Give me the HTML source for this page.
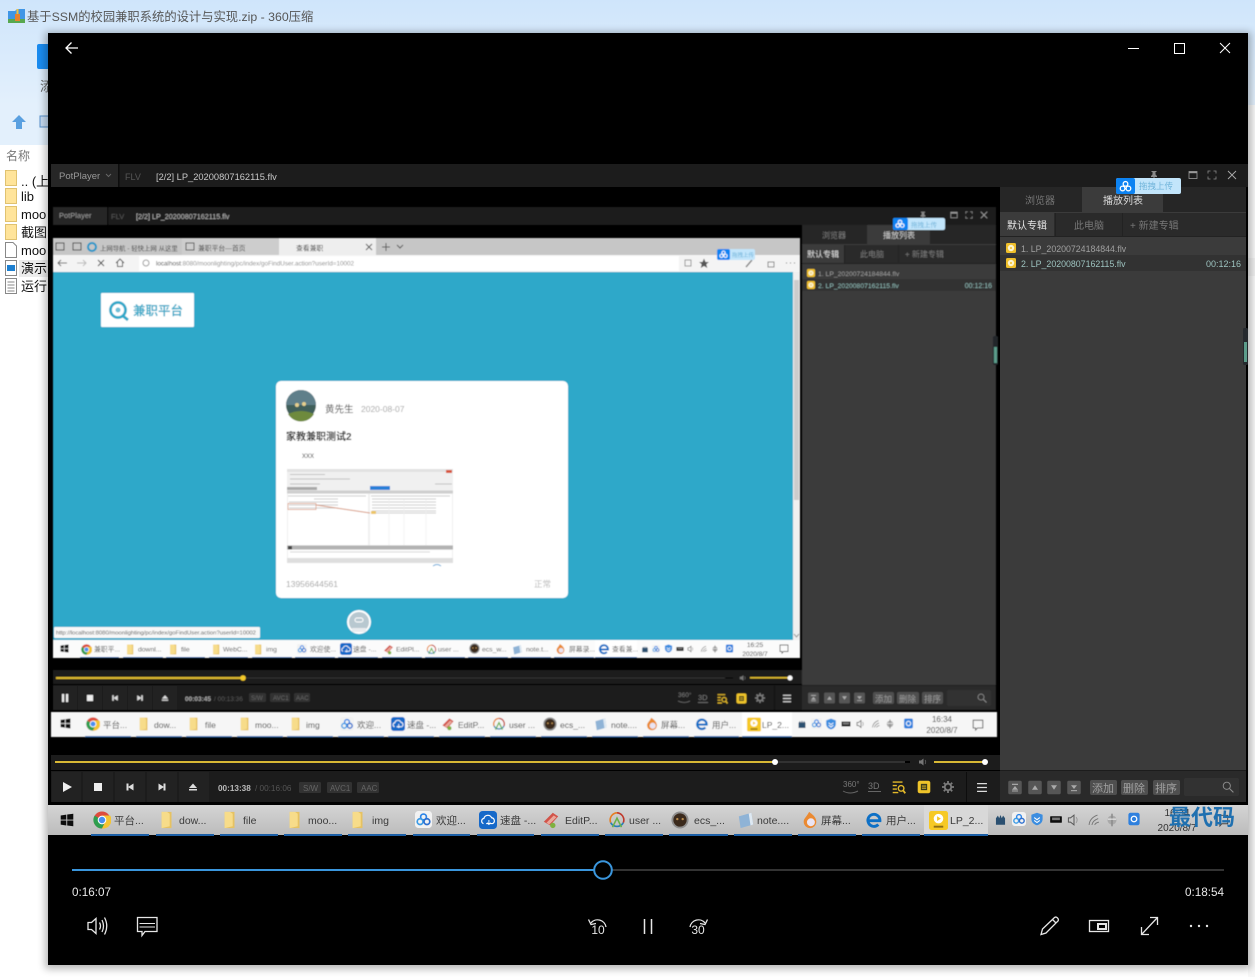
<!DOCTYPE html>
<html lang="zh"><head><meta charset="utf-8"><title>基于SSM的校园兼职系统的设计与实现</title>
<style>
html,body{margin:0;padding:0;background:#fff;width:1255px;height:977px;overflow:hidden}
svg{display:block;position:absolute;left:0;top:0}
text{font-family:"Liberation Sans","Noto Sans CJK SC",sans-serif}
</style></head><body>
<svg width="1255" height="977" viewBox="0 0 1255 977" xmlns="http://www.w3.org/2000/svg">
<defs>
<linearGradient id="top" x1="0" y1="0" x2="0" y2="1"><stop offset="0" stop-color="#cfe5fb"/><stop offset="1" stop-color="#e3f0fc"/></linearGradient>
<linearGradient id="tb3" x1="0" y1="0" x2="0" y2="1"><stop offset="0" stop-color="#d4d4d4"/><stop offset="1" stop-color="#bcbcbc"/></linearGradient>
<filter id="b1" x="-2%" y="-2%" width="104%" height="104%"><feGaussianBlur stdDeviation="0.45"/></filter>
<filter id="b2" x="-2%" y="-2%" width="104%" height="104%"><feGaussianBlur stdDeviation="0.35"/></filter>
<filter id="sh" x="-5%" y="-5%" width="110%" height="110%"><feGaussianBlur stdDeviation="4"/></filter>
<symbol id="win" viewBox="0 0 20 20"><path d="M1 3.5 9 2.3V9.4H1zM10.3 2.1 19 1V9.4H10.3zM1 10.7H9V17.8L1 16.6zM10.3 10.7H19V19L10.3 17.9z" fill="#111"/></symbol>
<symbol id="chrome" viewBox="0 0 20 20"><circle cx="10" cy="10" r="9.5" fill="#dd4b3c"/><path d="M10 10 1.8 5.2A9.5 9.5 0 0 0 10 19.5L14 11z" fill="#2f9e4f"/><path d="M10 5H19A9.5 9.5 0 0 1 10 19.5L14 11z" fill="#f4c430"/><circle cx="10" cy="10" r="4.8" fill="#fff"/><circle cx="10" cy="10" r="3.6" fill="#4a8ff0"/></symbol>
<symbol id="fold" viewBox="0 0 20 20"><path d="M4 1H15V19H4z" fill="#e6c262"/><path d="M4 1H10L13 3V17L4 19z" fill="#f7dc8a"/></symbol>
<symbol id="baidu" viewBox="0 0 20 20"><rect x="0" y="0" width="20" height="20" rx="4" fill="#f2f2f2"/><g fill="none" stroke-width="2"><circle cx="10" cy="7" r="3.4" stroke="#2d85e8"/><circle cx="6" cy="12.5" r="3.4" stroke="#3b9be6"/><circle cx="14" cy="12.5" r="3.4" stroke="#2d6fd0"/></g></symbol>
<symbol id="speed" viewBox="0 0 20 20"><rect width="20" height="20" rx="4" fill="#1769c9"/><path d="M5 14A3 3 0 0 1 5.5 8.2 4.5 4.5 0 0 1 14 7.5 3.4 3.4 0 0 1 15 14H8" fill="none" stroke="#fff" stroke-width="1.3"/><path d="M11 10v5m-2-2 2 2 2-2" fill="none" stroke="#fff"/></symbol>
<symbol id="edit" viewBox="0 0 20 20"><path d="M2 12 12 2l6 4-9 10z" fill="#d2534a"/><path d="M5 13 13 5l3 2-8 8z" fill="#e9a79a"/><circle cx="12" cy="16" r="3" fill="#7fb13f"/></symbol>
<symbol id="user" viewBox="0 0 20 20"><g fill="none" stroke-width="1.8"><path d="M3 13A8 8 0 0 1 10 2" stroke="#e67e22"/><path d="M10 2A8 8 0 0 1 17 13" stroke="#c0392b"/><path d="M17 13A8 8 0 0 1 3 13" stroke="#2980b9"/><path d="M5 18 10 8l5 10" stroke="#6ab04c"/></g></symbol>
<symbol id="ecs" viewBox="0 0 20 20"><circle cx="10" cy="10" r="9.5" fill="#8f8f8f"/><circle cx="10" cy="10" r="7.4" fill="#3a2a1e"/><circle cx="7" cy="9" r="1.3" fill="#b68a4e"/><circle cx="13" cy="9" r="1.3" fill="#b68a4e"/></symbol>
<symbol id="note" viewBox="0 0 20 20"><path d="M2 6 16 2 18 15 4 19z" fill="#8fb3d6"/><path d="M13 2.8 16 2 18 15 15 16z" fill="#dfe9f2"/></symbol>
<symbol id="fire" viewBox="0 0 20 20"><path d="M9 1C13 4 17 7 17 12A7 7 0 0 1 3 12C3 8 6 7 9 1z" fill="#ea8a32"/><circle cx="11" cy="12.5" r="4.4" fill="#e9e4f3"/></symbol>
<symbol id="ie" viewBox="0 0 20 20"><path d="M4 10.8H16.6A6.7 6.7 0 1 0 14.8 15" fill="none" stroke="#0f6fc6" stroke-width="3.2"/></symbol>
<symbol id="pl" viewBox="0 0 20 20"><rect width="20" height="20" rx="2.5" fill="#f6c927"/><circle cx="10" cy="8" r="5" fill="#fff"/><path d="M8.5 5.5 12.5 8 8.5 10.5z" fill="#f6c927"/><rect x="5" y="15.5" width="10" height="2" fill="#8d6d12"/></symbol>
<symbol id="t1" viewBox="0 0 20 20"><path d="M3 18V8l3-4 2 4 2-5 2 5 2-4 3 4v10z" fill="#29506f"/></symbol>
<symbol id="t3" viewBox="0 0 20 20"><path d="M10 1 18 4V10C18 15 14 18 10 19 6 18 2 15 2 10V4z" fill="#3a8de0"/><path d="M6 8l4 3 4-3M6 12l4 3 4-3" fill="none" stroke="#fff" stroke-width="1.5"/></symbol>
<symbol id="t4" viewBox="0 0 20 20"><rect x="1" y="5" width="18" height="10" rx="1" fill="#111"/><rect x="4" y="7" width="12" height="4" fill="#777"/></symbol>
<symbol id="t5" viewBox="0 0 20 20"><path d="M2 7H5L10 3V17L5 13H2z" fill="none" stroke="#555" stroke-width="1.4"/><path d="M13 6Q16 10 13 14" fill="none" stroke="#999" stroke-width="1.4"/></symbol>
<symbol id="t6" viewBox="0 0 20 20"><g fill="none" stroke="#777" stroke-width="1.4"><path d="M3 17Q4 7 15 3"/><path d="M7 17Q8 11 16 8"/><path d="M11 17Q12 14 17 13"/></g></symbol>
<symbol id="t7" viewBox="0 0 20 20"><circle cx="10" cy="10" r="6.5" fill="#a9a9a9"/><rect x="9" y="1" width="2" height="18" fill="#888"/><rect x="4" y="8" width="12" height="1.5" fill="#eee"/></symbol>
<symbol id="q" viewBox="0 0 20 20"><rect x="2" y="1" width="16" height="18" rx="3" fill="#2f80de"/><circle cx="10" cy="10" r="4" fill="none" stroke="#fff" stroke-width="1.8"/></symbol>
<symbol id="chat" viewBox="0 0 20 20"><path d="M2 2H18V15H9L6 18.5V15H2z" fill="none" stroke="#444" stroke-width="1.4"/></symbol>
<symbol id="yn" viewBox="0 0 20 20"><rect x="1" y="1" width="18" height="18" rx="3" fill="#efc42a"/><rect x="5.5" y="5.5" width="9" height="9" fill="#3a3a1a"/><rect x="7" y="8" width="6" height="1.3" fill="#efc42a"/><rect x="7" y="11" width="6" height="1.3" fill="#efc42a"/></symbol>
<symbol id="yq" viewBox="0 0 20 20"><g stroke="#e3b92b" stroke-width="2" fill="none"><path d="M1 3H15M1 8H7M1 13H7M1 18H9"/><circle cx="13" cy="12" r="4"/><path d="M16 15 19 19" stroke-width="2.6"/></g></symbol>
<symbol id="gear" viewBox="0 0 20 20"><circle cx="10" cy="10" r="5.4" fill="none" stroke="#7c7c7c" stroke-width="3"/><g stroke="#7c7c7c" stroke-width="3"><path d="M10 0V4M10 16V20M0 10H4M16 10H20M3 3 5.6 5.6M14.4 14.4 17 17M17 3 14.4 5.6M5.6 14.4 3 17"/></g></symbol>
<symbol id="menu" viewBox="0 0 20 20"><path d="M1 3H19M1 10H19M1 17H19" stroke="#ddd" stroke-width="2.4"/></symbol>
<symbol id="mag" viewBox="0 0 20 20"><circle cx="8" cy="8" r="6" fill="none" stroke="#8c8c8c" stroke-width="1.6"/><path d="M12.5 12.5 19 19" stroke="#8c8c8c" stroke-width="1.8"/></symbol>
<symbol id="disc" viewBox="0 0 20 20"><rect width="20" height="20" rx="3" fill="#efbf2a"/><circle cx="10" cy="10" r="6.4" fill="#fbf3cf"/><circle cx="10" cy="10" r="2" fill="#efbf2a"/></symbol>
<symbol id="tp" viewBox="0 0 20 20"><rect x="1" y="1" width="18" height="18" rx="2" fill="#565656"/><rect x="6" y="5" width="8" height="1.6" fill="#aaa"/><path d="M10 8 14 13H6z" fill="#aaa"/><rect x="6" y="14" width="8" height="1.3" fill="#aaa"/></symbol>
<symbol id="up" viewBox="0 0 20 20"><rect x="1" y="1" width="18" height="18" rx="2" fill="#565656"/><path d="M10 7 14 13H6z" fill="#aaa"/></symbol>
<symbol id="dn" viewBox="0 0 20 20"><rect x="1" y="1" width="18" height="18" rx="2" fill="#565656"/><path d="M10 13 14 7H6z" fill="#aaa"/></symbol>
<symbol id="bt" viewBox="0 0 20 20"><rect x="1" y="1" width="18" height="18" rx="2" fill="#565656"/><path d="M10 12 14 7H6z" fill="#aaa"/><rect x="6" y="13.5" width="8" height="1.4" fill="#aaa"/></symbol>
<symbol id="prev" viewBox="0 0 20 20"><rect x="3" y="3" width="4" height="14" fill="#ddd"/><path d="M6 10 17 3V17z" fill="#ddd"/></symbol>
<symbol id="next" viewBox="0 0 20 20"><rect x="13" y="3" width="4" height="14" fill="#ddd"/><path d="M14 10 3 3V17z" fill="#ddd"/></symbol>
<symbol id="ej" viewBox="0 0 20 20"><path d="M10 3 18 12H2z" fill="#ddd"/><rect x="2" y="14" width="16" height="3" fill="#ddd"/></symbol>
<symbol id="spk" viewBox="0 0 20 20"><path d="M2 7H6L11 3V17L6 13H2z" fill="#777"/><path d="M14 6Q17 10 14 14" fill="none" stroke="#666" stroke-width="1.5"/></symbol>
<symbol id="pin" viewBox="0 0 20 20"><path d="M5 2H15V4H13V9L16 12V14H11V19H9V14H4V12L7 9V4H5z" fill="#8a8a8a"/></symbol>
<symbol id="max" viewBox="0 0 20 20"><rect x="2" y="3" width="16" height="14" fill="none" stroke="#999" stroke-width="1.6"/><rect x="2" y="3" width="16" height="3.4" fill="#999"/></symbol>
<symbol id="fs" viewBox="0 0 20 20"><path d="M2 7V2H7M13 2H18V7M18 13V18H13M7 18H2V13" fill="none" stroke="#8a8a8a" stroke-width="1.6"/></symbol>
<symbol id="cls" viewBox="0 0 20 20"><path d="M2 2 18 18M18 2 2 18" stroke="#aaa" stroke-width="1.8"/></symbol>
<symbol id="tag" viewBox="0 0 20 20"><circle cx="10" cy="6" r="3.6" fill="none" stroke="#fff" stroke-width="2"/><circle cx="5.5" cy="13" r="3.6" fill="none" stroke="#fff" stroke-width="2"/><circle cx="14.5" cy="13" r="3.6" fill="none" stroke="#fff" stroke-width="2"/></symbol>
</defs>

<!-- 360 compress background window -->
<rect width="1255" height="977" fill="#fff"/>
<rect width="1255" height="105" fill="url(#top)"/>
<rect y="105" width="48" height="40" fill="#e3f0fc"/>
<rect x="1248" y="105" width="7" height="872" fill="#f8f8f8"/>
<rect x="1248" y="258" width="7" height="18" fill="#f0f0f0"/>
<path d="M8 11H15L17 9H25V23H8z" fill="#3f96e6"/><rect x="8" y="19" width="17" height="4" fill="#58a84f"/><rect x="15" y="14" width="5" height="7" fill="#e8822e"/><rect x="16.500" y="9" width="2" height="5" fill="#f0c040"/>
<text x="27" y="21" font-size="12.300" fill="#565656">基于SSM的校园兼职系统的设计与实现.zip - 360压缩</text>
<rect x="37" y="44" width="14" height="25" rx="2" fill="#1a8cf0"/>
<text x="40" y="91" font-size="13" fill="#666">添</text>
<path d="M19 115 26 122H22V129H16V122H12z" fill="#5aa0e0"/>
<rect x="40" y="116" width="9" height="11" fill="#c7dcf2" stroke="#5a92cc"/>
<text x="6" y="160" font-size="12" fill="#777">名称</text>
<g fill="#ffe49a" stroke="#e0c270"><rect x="5.500" y="170.500" width="11" height="15"/><rect x="5.500" y="188.500" width="11" height="15"/><rect x="5.500" y="206.500" width="11" height="15"/><rect x="5.500" y="224.500" width="11" height="15"/></g>
<path d="M5.500 242.500H13L16.500 246V257.500H5.500z" fill="#fff" stroke="#888"/>
<rect x="19" y="260" width="29" height="17" fill="#ececec"/>
<rect x="5.500" y="260.500" width="11" height="15" fill="#fff" stroke="#888"/><rect x="7" y="265" width="8" height="6" fill="#1c7fd0"/>
<rect x="5.500" y="278.500" width="11" height="15" fill="#fff" stroke="#888"/><path d="M7.500 282H14.500M7.500 285H14.500M7.500 288H14.500M7.500 291H14.500" stroke="#888"/>
<g font-size="13" fill="#111">
<text x="21" y="186">.. (上</text><text x="21" y="201">lib</text><text x="21" y="219">moo</text><text x="21" y="237">截图</text><text x="21" y="255">moo</text><text x="21" y="273">演示</text><text x="21" y="291">运行</text>
</g>

<!-- Movies & TV window -->
<rect x="45" y="32" width="1206" height="937" fill="#000" opacity=".28" filter="url(#sh)"/>
<rect x="48" y="33" width="1200" height="932" fill="#000"/>
<path d="M78 48H66M71.500 42.500 66 48l5.500 5.500" fill="none" stroke="#fff" stroke-width="1.3"/>
<rect x="1128" y="48" width="11" height="1" fill="#fff"/>
<rect x="1174.500" y="43.500" width="10" height="10" fill="none" stroke="#fff"/>
<path d="M1220 43 1230 53M1230 43 1220 53" stroke="#fff"/>

<!-- recorded video -->
<g filter="url(#b2)">
<!-- level 1 PotPlayer title -->
<rect x="51" y="164" width="1197" height="23" fill="#1e1e1e"/>
<rect x="51" y="164" width="67" height="23" fill="#252525"/>
<rect x="118" y="164" width="1.500" height="23" fill="#111"/>
<text x="59" y="179" font-size="9.500" fill="#999">PotPlayer</text>
<path d="M106 174 108.500 176.500 111 174" fill="none" stroke="#666"/>
<text x="125" y="180" font-size="9" fill="#555">FLV</text>
<text x="156" y="180" font-size="9.300" fill="#c8c8c8">[2/2] LP_20200807162115.flv</text>
<use href="#pin" x="1149" y="170" width="10" height="10"/>
<use href="#max" x="1188" y="170" width="10" height="10"/>
<use href="#fs" x="1207" y="170" width="10" height="10"/>
<use href="#cls" x="1227" y="170" width="10" height="10"/>

<!-- level 1 right panel -->
<rect x="1000" y="187" width="246" height="615" fill="#3b3b3b"/>
<rect x="1000" y="187" width="246" height="25" fill="#262626"/>
<rect x="1082" y="187" width="81" height="26" fill="#3b3b3b"/>
<rect x="1000" y="213" width="246" height="23" fill="#2c2c2c"/>
<rect x="1000" y="213" width="54" height="24" fill="#3b3b3b"/>
<rect x="1055" y="213" width="1" height="23" fill="#222"/><rect x="1122" y="213" width="1" height="23" fill="#222"/>
<rect x="1000" y="236" width="246" height="1" fill="#222"/>
<text x="1025" y="204" font-size="10" fill="#777">浏览器</text>
<text x="1103" y="204" font-size="10" fill="#ddd">播放列表</text>
<text x="1007" y="229" font-size="10" fill="#e6e6e6">默认专辑</text>
<text x="1074" y="229" font-size="10" fill="#777">此电脑</text>
<text x="1130" y="229" font-size="10" fill="#777">+ 新建专辑</text>
<rect x="1000" y="255" width="246" height="16" fill="#303030"/>
<use href="#disc" x="1006" y="243" width="10" height="10"/>
<use href="#disc" x="1006" y="258" width="10" height="10"/>
<text x="1021" y="252" font-size="8.800" fill="#a0a0a0">1. LP_20200724184844.flv</text>
<text x="1021" y="267" font-size="8.800" fill="#9ec4c0">2. LP_20200807162115.flv</text>
<text x="1241" y="267" font-size="9" fill="#9ec4c0" text-anchor="end">00:12:16</text>
<rect x="1243" y="328" width="5" height="37" rx="1.500" fill="#252a2e"/><rect x="1244" y="342" width="3" height="20" fill="#5b9c8a"/>
<rect x="1000" y="770" width="246" height="32" fill="#2b2b2b"/><rect x="1000" y="770" width="246" height="1" fill="#1a1a1a"/>
<use href="#tp" x="1007" y="780" width="16" height="15"/><use href="#up" x="1027" y="780" width="16" height="15"/><use href="#dn" x="1046" y="780" width="16" height="15"/><use href="#bt" x="1066" y="780" width="16" height="15"/>
<g fill="#505050"><rect x="1090" y="780" width="27" height="15" rx="2"/><rect x="1121" y="780" width="27" height="15" rx="2"/><rect x="1153" y="780" width="27" height="15" rx="2"/></g>
<g font-size="11" fill="#a0a0a0"><text x="1092" y="792">添加</text><text x="1123" y="792">删除</text><text x="1155" y="792">排序</text></g>
<rect x="1184" y="778" width="55" height="18" rx="2" fill="#323232"/>
<use href="#mag" x="1222" y="781" width="12" height="12"/>

<!-- level 1 baidu tag -->
<rect x="1116" y="178" width="65" height="16" rx="2" fill="#c2e5fb"/>
<rect x="1116" y="178" width="19" height="16" rx="2" fill="#0c83f2"/>
<use href="#tag" x="1119" y="180" width="13" height="13"/>
<text x="1139" y="189" font-size="8.500" fill="#6fb4da">拖拽上传</text>

<!-- level 1 controls -->
<rect x="51" y="755" width="949" height="15" fill="#1c1c1c"/>
<rect x="55" y="761" width="720" height="2" fill="#d9b935"/>
<rect x="775" y="761" width="130" height="2" fill="#333"/>
<rect x="905" y="761" width="5" height="2" fill="#000"/>
<circle cx="775" cy="762" r="3" fill="#fff"/>
<use href="#spk" x="918" y="757" width="10" height="10"/>
<rect x="934" y="761" width="51" height="2" fill="#d9b935"/>
<circle cx="985" cy="762" r="3" fill="#fff"/>
<rect x="51" y="771" width="949" height="31" fill="#1c1c1c"/>
<g fill="#222"><rect x="52" y="772" width="29" height="30"/><rect x="83" y="772" width="30" height="30"/><rect x="115" y="772" width="30" height="30"/><rect x="147" y="772" width="30" height="30"/><rect x="179" y="772" width="30" height="30"/></g>
<path d="M63 782 72 787 63 792z" fill="#eee"/>
<rect x="94" y="783" width="8" height="8" fill="#eee"/>
<use href="#prev" x="125" y="782" width="10" height="10"/><use href="#next" x="157" y="782" width="10" height="10"/><use href="#ej" x="188" y="782" width="10" height="10"/>
<text x="218" y="791" font-size="8.200" font-weight="bold" fill="#bbb">00:13:38</text>
<text x="255" y="791" font-size="8.200" fill="#555">/ 00:16:06</text>
<g fill="#303030"><rect x="299" y="782" width="22" height="11" rx="1"/><rect x="327" y="782" width="25" height="11" rx="1"/><rect x="357" y="782" width="22" height="11" rx="1"/></g>
<g font-size="8" fill="#666"><text x="303" y="791">S/W</text><text x="330" y="791">AVC1</text><text x="361" y="791">AAC</text></g>
<text x="843" y="787" font-size="8" fill="#777">360°</text><path d="M843 791Q850 795 858 791" fill="none" stroke="#666"/>
<text x="868" y="789" font-size="9" fill="#777">3D</text><rect x="868" y="791" width="13" height="1" fill="#666"/>
<use href="#yq" x="892" y="780" width="14" height="14"/>
<use href="#yn" x="917" y="780" width="14" height="14"/>
<use href="#gear" x="942" y="781" width="12" height="12"/>
<rect x="966" y="772" width="1" height="30" fill="#111"/>
<use href="#menu" x="976" y="782" width="12" height="11"/>

<!-- level 3 taskbar -->
<rect x="48" y="805" width="1200" height="30" fill="url(#tb3)"/>
<rect x="924" y="805" width="64" height="30" fill="#d8d8d8"/>
<use href="#win" x="60" y="813" width="14" height="14"/>
<use href="#chrome" x="93" y="811" width="18" height="18"/>
<use href="#fold" x="158" y="811" width="18" height="18"/><use href="#fold" x="221" y="811" width="18" height="18"/><use href="#fold" x="286" y="811" width="18" height="18"/><use href="#fold" x="349" y="811" width="18" height="18"/>
<use href="#baidu" x="415" y="811" width="17" height="17"/><use href="#speed" x="479" y="811" width="18" height="18"/><use href="#edit" x="542" y="811" width="18" height="18"/><use href="#user" x="608" y="811" width="18" height="18"/><use href="#ecs" x="671" y="811" width="18" height="18"/><use href="#note" x="737" y="811" width="18" height="18"/><use href="#fire" x="801" y="811" width="18" height="18"/><use href="#ie" x="865" y="811" width="18" height="18"/><use href="#pl" x="929" y="811" width="19" height="19"/>
<g font-size="10.500" fill="#3a3a3a"><text x="114" y="824">平台...</text><text x="179" y="824">dow...</text><text x="243" y="824">file</text><text x="308" y="824">moo...</text><text x="372" y="824">img</text><text x="436" y="824">欢迎...</text><text x="500" y="824">速盘 -...</text><text x="565" y="824">EditP...</text><text x="629" y="824">user ...</text><text x="694" y="824">ecs_...</text><text x="757" y="824">note....</text><text x="821" y="824">屏幕...</text><text x="886" y="824">用户...</text><text x="950" y="824">LP_2...</text></g>
<g fill="#1d5ea6"><rect x="91" y="834" width="58" height="2"/><rect x="156" y="834" width="58" height="2"/><rect x="220" y="834" width="58" height="2"/><rect x="284" y="834" width="58" height="2"/><rect x="348" y="834" width="58" height="2"/><rect x="413" y="834" width="57" height="2"/><rect x="477" y="834" width="57" height="2"/><rect x="541" y="834" width="58" height="2"/><rect x="605" y="834" width="58" height="2"/><rect x="669" y="834" width="59" height="2"/><rect x="734" y="834" width="58" height="2"/><rect x="798" y="834" width="58" height="2"/><rect x="862" y="834" width="58" height="2"/><rect x="924" y="834" width="64" height="2"/></g>
<use href="#t1" x="994" y="813" width="13" height="13"/><use href="#baidu" x="1012" y="812" width="14" height="14"/><use href="#t3" x="1030" y="812" width="14" height="14"/><use href="#t4" x="1049" y="813" width="14" height="13"/><use href="#t5" x="1067" y="813" width="14" height="14"/><use href="#t6" x="1087" y="813" width="14" height="14"/><use href="#t7" x="1105" y="813" width="14" height="14"/><use href="#q" x="1127" y="812" width="14" height="14"/>
<text x="1177" y="816" font-size="10" text-anchor="middle" fill="#333">16:34</text>
<text x="1177" y="831" font-size="10" text-anchor="middle" fill="#333">2020/8/7</text>
<use href="#chat" x="1216" y="814" width="13" height="13"/>

<!-- video frame level 2 (blurrier) -->
<g filter="url(#b1)">
<rect x="53" y="207" width="943" height="18" fill="#1e1e1e"/>
<rect x="53" y="207" width="54" height="18" fill="#262626"/>
<rect x="107" y="207" width="1.500" height="18" fill="#111"/>
<text x="59" y="218" font-size="7.500" fill="#999">PotPlayer</text>
<text x="111" y="219" font-size="7.500" fill="#555">FLV</text>
<text x="136" y="219" font-size="7.200" fill="#b8b8b8">[2/2] LP_20200807162115.flv</text>
<use href="#pin" x="919" y="211" width="8" height="8"/><use href="#max" x="950" y="211" width="8" height="8"/><use href="#fs" x="965" y="211" width="8" height="8"/><use href="#cls" x="980" y="211" width="8" height="8"/>

<rect x="802" y="225" width="194" height="485" fill="#3b3b3b"/>
<rect x="802" y="225" width="194" height="19" fill="#262626"/>
<rect x="867" y="225" width="63" height="20" fill="#3b3b3b"/>
<rect x="802" y="245" width="194" height="18" fill="#2c2c2c"/>
<rect x="802" y="245" width="42" height="19" fill="#3b3b3b"/>
<rect x="844" y="245" width="1" height="18" fill="#222"/><rect x="898" y="245" width="1" height="18" fill="#222"/>
<rect x="802" y="263" width="194" height="1" fill="#222"/>
<text x="822" y="238" font-size="8" fill="#777">浏览器</text>
<text x="883" y="238" font-size="8" fill="#ccc">播放列表</text>
<text x="807" y="257" font-size="8" fill="#ddd">默认专辑</text>
<text x="860" y="257" font-size="8" fill="#777">此电脑</text>
<text x="905" y="257" font-size="8" fill="#777">+ 新建专辑</text>
<rect x="802" y="279" width="194" height="12" fill="#303030"/>
<use href="#disc" x="807" y="269" width="8" height="8"/><use href="#disc" x="807" y="281" width="8" height="8"/>
<text x="818" y="276" font-size="6.800" fill="#999">1. LP_20200724184844.flv</text>
<text x="818" y="288" font-size="6.800" fill="#8fb8b4">2. LP_20200807162115.flv</text>
<text x="992" y="288" font-size="7" fill="#8fb8b4" text-anchor="end">00:12:16</text>
<rect x="993" y="336" width="5" height="29" rx="1.500" fill="#23282c"/><rect x="994" y="347" width="3" height="16" fill="#5b9c8a"/>
<rect x="802" y="685" width="194" height="25" fill="#2b2b2b"/><rect x="802" y="685" width="194" height="1" fill="#1a1a1a"/>
<use href="#tp" x="807" y="692" width="13" height="12"/><use href="#up" x="823" y="692" width="13" height="12"/><use href="#dn" x="838" y="692" width="13" height="12"/><use href="#bt" x="853" y="692" width="13" height="12"/>
<g fill="#505050"><rect x="873" y="692" width="21" height="12" rx="2"/><rect x="897" y="692" width="22" height="12" rx="2"/><rect x="922" y="692" width="21" height="12" rx="2"/></g>
<g font-size="8.500" fill="#999"><text x="875" y="702">添加</text><text x="899" y="702">删除</text><text x="924" y="702">排序</text></g>
<rect x="947" y="690" width="44" height="16" rx="2" fill="#323232"/><use href="#mag" x="977" y="693" width="10" height="10"/>
<rect x="893" y="218" width="52" height="12" rx="2" fill="#c2e5fb"/><rect x="893" y="218" width="15" height="12" rx="2" fill="#0c83f2"/><use href="#tag" x="895" y="219" width="10" height="10"/>
<text x="911" y="227" font-size="6.500" fill="#6fb4da">拖拽上传</text>

<!-- browser -->
<rect x="53" y="238" width="747" height="17" fill="#c6c6c6"/>
<rect x="279" y="238" width="97" height="17" fill="#eeeeee"/>
<rect x="182" y="238" width="97" height="17" fill="#cdcdcd"/>
<rect x="56" y="243" width="8" height="7" fill="none" stroke="#444"/><rect x="73" y="243" width="8" height="7" fill="none" stroke="#444"/>
<circle cx="92" cy="247" r="4" fill="none" stroke="#1d96c9" stroke-width="2"/>
<text x="100" y="248" font-size="6.400" dy="2.300" fill="#444">上网导航 - 轻快上网 从这里</text>
<rect x="186" y="243" width="8" height="7" fill="none" stroke="#555"/>
<text x="198" y="248" font-size="6.800" dy="2.300" fill="#444">兼职平台—首页</text>
<text x="296" y="248" font-size="6.800" dy="2.300" fill="#333">查看兼职</text>
<path d="M366 244 372 250M372 244 366 250" stroke="#555"/>
<path d="M382 247H390M386 243V251" stroke="#555"/><path d="M397 245 400 248 403 245" fill="none" stroke="#555"/>
<rect x="53" y="255" width="747" height="17" fill="#f4f4f4"/>
<rect x="139" y="256" width="540" height="15" fill="#fff"/>
<path d="M67 263H58M61 260 58 263 61 266" fill="none" stroke="#666"/>
<path d="M77 263H86M83 260 86 263 83 266" fill="none" stroke="#bbb"/>
<path d="M98 260 104 266M104 260 98 266" stroke="#444"/>
<path d="M116 263 120 259 124 263M117.500 262V266.500H122.500V262" fill="none" stroke="#555"/>
<circle cx="146" cy="263" r="3" fill="none" stroke="#999"/>
<text x="156" y="265.500" font-size="6.300" fill="#8a8a8a"><tspan fill="#333">localhost</tspan>:8080/moonlighting/pc/index/goFindUser.action?userId=10002</text>
<rect x="685" y="260" width="6" height="6" fill="none" stroke="#999"/>
<path d="M704 258.500 705.500 262H709L706.300 264.300 707.300 268 704 266 700.700 268 701.700 264.300 699 262H702.500z" fill="#555"/>
<path d="M746 267 752 260" stroke="#888" stroke-width="1.500"/><path d="M768 262h6v5h-6z" fill="none" stroke="#888"/><path d="M786 263h1M790 263h1M794 263h1" stroke="#555"/>
<rect x="717" y="249" width="38" height="11" rx="2" fill="#c2e5fb"/><rect x="717" y="249" width="13" height="11" rx="2" fill="#0c83f2"/><use href="#tag" x="719" y="250" width="9" height="9"/>
<text x="732" y="257" font-size="5.500" fill="#6fb4da">拖拽上传</text>

<!-- page -->
<rect x="53" y="272" width="740" height="368" fill="#2ea8c9"/>
<rect x="793" y="272" width="7" height="368" fill="#f0f0f0"/><rect x="794" y="280" width="5" height="220" fill="#ccc"/>
<path d="M794 634 796.500 637 799 634" fill="none" stroke="#999"/>
<rect x="101" y="293" width="93" height="34" rx="1" fill="#fff"/>
<circle cx="118" cy="310" r="7.500" fill="none" stroke="#2ea8c9" stroke-width="2.800"/><path d="M123 316 128 320" stroke="#2ea8c9" stroke-width="2.800"/><circle cx="118" cy="310" r="2.500" fill="#6fc0d8"/>
<text x="133" y="315" font-size="12.500" font-weight="bold" fill="#46aecb">兼职平台</text>
<rect x="276" y="381" width="292" height="217" rx="5" fill="#fff"/>
<circle cx="301" cy="405" r="15" fill="#3f5f5a"/><path d="M286 405A15 15 0 0 1 316 405z" fill="#5f7f8a"/><path d="M288 414Q301 408 314 414A15 15 0 0 1 288 414z" fill="#6e8a3d"/><circle cx="297" cy="405" r="2" fill="#e7d08d"/><circle cx="304" cy="404" r="2" fill="#e7d08d"/>
<text x="325" y="412.500" font-size="9.500" fill="#444">黄先生</text>
<text x="361" y="412" font-size="8.500" fill="#a6a6a6">2020-08-07</text>
<text x="286" y="440" font-size="10" font-weight="bold" fill="#333">家教兼职测试2</text>
<text x="302" y="458" font-size="8" fill="#555">xxx</text>
<!-- embedded screenshot -->
<rect x="287" y="469" width="166" height="94" fill="#f0f0f0"/>
<rect x="287" y="469" width="166" height="3" fill="#e2e2e2"/>
<rect x="446" y="470" width="6" height="3" fill="#d8543a"/>
<path d="M290 474.500H325M290 479H350M290 484H320M435 484H452" stroke="#b4b4b4" stroke-width=".8"/>
<rect x="287" y="487" width="30" height="3" fill="#a8a8a8"/>
<rect x="370" y="486" width="20" height="4" fill="#2a7fd8"/>
<rect x="287" y="490.500" width="166" height="3" fill="#cfcfcf"/>
<rect x="288" y="494" width="80" height="51" fill="#fff"/>
<rect x="370" y="494" width="82" height="51" fill="#fff"/>
<g stroke="#bdbdbd" stroke-width=".7"><path d="M288 496H366M314 499H338M289 502H338M289 505H338M289 508H338"/><path d="M371 496H450M372 499H436M372 502H436M372 505H436M372 508H436M372 511H436M372 513H436"/><path d="M389 500V545M404 500V545M426 500V545" stroke="#eee"/></g>
<path d="M288 503.500H316V509.500H288z" fill="none" stroke="#d89a80" stroke-width=".7"/>
<path d="M316 505 370 513" stroke="#d89a80" stroke-width="1"/>
<rect x="371" y="511" width="5" height="3" fill="#ecc565"/>
<rect x="287" y="545.500" width="166" height="4" fill="#b2b2b2"/><rect x="288" y="546" width="4" height="3.500" fill="#444"/>
<rect x="288" y="550" width="164" height="8" fill="#fff"/><path d="M290 552H430" stroke="#ccc" stroke-width=".7"/>
<rect x="287" y="558" width="166" height="5" fill="#dedede"/>
<path d="M433 566Q437 563 441 566" fill="none" stroke="#66a8d8"/>
<text x="286" y="587" font-size="8.500" fill="#a6a6a6">13956644561</text>
<text x="534" y="587" font-size="8.500" fill="#bbb">正常</text>
<circle cx="359" cy="622" r="12" fill="#fff"/><circle cx="359" cy="622" r="10" fill="#b8c8d0"/><path d="M352 628H366V632H352z" fill="#e8ecef"/><rect x="355" y="618" width="8" height="4" rx="2" fill="none" stroke="#fff"/>
<!-- status -->
<rect x="54" y="627" width="206" height="11" rx="1" fill="#f8f8f8"/>
<text x="56" y="634.500" font-size="5.900" fill="#555">http://localhost:8080/moonlighting/pc/index/goFindUser.action?userId=10002</text>

<!-- level 1 inner taskbar -->
<rect x="53" y="640" width="747" height="18" fill="#fbfbfb"/>
<rect x="595" y="640" width="42" height="18" fill="#fff"/>
<use href="#win" x="60" y="644" width="9" height="9"/><use href="#chrome" x="81" y="644" width="11" height="11"/>
<use href="#fold" x="125" y="644" width="11" height="11"/><use href="#fold" x="168" y="644" width="11" height="11"/><use href="#fold" x="211" y="644" width="11" height="11"/><use href="#fold" x="253" y="644" width="11" height="11"/>
<use href="#baidu" x="297" y="644" width="10" height="10"/><use href="#speed" x="340" y="643" width="12" height="12"/><use href="#edit" x="383" y="644" width="11" height="11"/><use href="#user" x="426" y="644" width="11" height="11"/><use href="#ecs" x="469" y="643" width="11" height="11"/><use href="#note" x="512" y="644" width="11" height="11"/><use href="#fire" x="555" y="643" width="11" height="12"/><use href="#ie" x="598" y="643" width="12" height="12"/>
<g font-size="6.800" fill="#555"><text x="94" y="651.500">兼职平...</text><text x="138" y="651.500">downl...</text><text x="181" y="651.500">file</text><text x="223" y="651.500">WebC...</text><text x="266" y="651.500">img</text><text x="310" y="651.500">欢迎使...</text><text x="353" y="651.500">速盘 -...</text><text x="396" y="651.500">EditPl...</text><text x="438" y="651.500">user ...</text><text x="482" y="651.500">ecs_w...</text><text x="526" y="651.500">note.t...</text><text x="569" y="651.500">屏幕录...</text><text x="612" y="651.500">查看兼...</text></g>
<g fill="#2f6fb8"><rect x="80" y="657" width="39" height="1"/><rect x="123" y="657" width="40" height="1"/><rect x="166" y="657" width="39" height="1"/><rect x="209" y="657" width="39" height="1"/><rect x="252" y="657" width="40" height="1"/><rect x="295" y="657" width="40" height="1"/><rect x="338" y="657" width="40" height="1"/><rect x="382" y="657" width="40" height="1"/><rect x="425" y="657" width="40" height="1"/><rect x="468" y="657" width="40" height="1"/><rect x="511" y="657" width="40" height="1"/><rect x="554" y="657" width="40" height="1"/><rect x="595" y="657" width="42" height="1"/></g>
<use href="#t1" x="641" y="645" width="8" height="8"/><use href="#baidu" x="652" y="645" width="8" height="8"/><use href="#t3" x="664" y="644" width="9" height="9"/><use href="#t4" x="676" y="645" width="8" height="8"/><use href="#t5" x="687" y="645" width="8" height="8"/><use href="#t6" x="700" y="645" width="8" height="8"/><use href="#t7" x="711" y="645" width="8" height="8"/><use href="#q" x="725" y="644" width="9" height="9"/>
<text x="755" y="647" font-size="6.500" text-anchor="middle" fill="#333">16:25</text><text x="755" y="656" font-size="6.500" text-anchor="middle" fill="#333">2020/8/7</text>
<use href="#chat" x="779" y="644" width="10" height="10"/>

<!-- level 2 controls -->
<rect x="53" y="670" width="749" height="14" fill="#1c1c1c"/>
<rect x="56" y="677" width="187" height="2" fill="#dcb92e"/>
<rect x="243" y="677.500" width="490" height="1" fill="#333"/><rect x="725" y="677.500" width="8" height="1" fill="#000"/>
<circle cx="243" cy="678" r="2.800" fill="#f4c92a"/>
<use href="#spk" x="739" y="674" width="8" height="8"/>
<rect x="750" y="677" width="40" height="1.500" fill="#dcb92e"/>
<circle cx="790" cy="678" r="2.500" fill="#fff"/>
<rect x="53" y="685" width="749" height="25" fill="#1c1c1c"/>
<g fill="#202020"><rect x="53" y="686" width="24" height="24"/><rect x="78" y="686" width="24" height="24"/><rect x="103" y="686" width="24" height="24"/><rect x="128" y="686" width="24" height="24"/><rect x="153" y="686" width="24" height="24"/></g>
<rect x="62" y="694" width="2.200" height="8" fill="#eee"/><rect x="66" y="694" width="2.200" height="8" fill="#eee"/>
<rect x="87" y="695" width="6" height="6" fill="#eee"/>
<use href="#prev" x="111" y="694" width="8" height="8"/><use href="#next" x="136" y="694" width="8" height="8"/><use href="#ej" x="161" y="694" width="8" height="8"/>
<text x="185" y="701" font-size="6.500" font-weight="bold" fill="#aaa">00:03:45</text>
<text x="214" y="701" font-size="6.500" fill="#555">/ 00:13:36</text>
<g fill="#303030"><rect x="249" y="693" width="17" height="9" rx="1"/><rect x="270" y="693" width="20" height="9" rx="1"/><rect x="294" y="693" width="16" height="9" rx="1"/></g>
<g font-size="6.200" fill="#666"><text x="251" y="700">S/W</text><text x="273" y="700">AVC1</text><text x="296" y="700">AAC</text></g>
<text x="678" y="697" font-size="6.500" fill="#777">360°</text><path d="M678 701Q684 704 690 701" fill="none" stroke="#666" stroke-width=".7"/>
<text x="698" y="700" font-size="7.500" fill="#777">3D</text><rect x="698" y="702" width="10" height="1" fill="#666"/>
<use href="#yq" x="717" y="693" width="11" height="11"/><use href="#yn" x="736" y="693" width="11" height="11"/><use href="#gear" x="755" y="693" width="10" height="10"/>
<rect x="774" y="686" width="1" height="24" fill="#111"/>
<use href="#menu" x="782" y="694" width="10" height="9"/>

<!-- level 2 taskbar -->
<rect x="51" y="712" width="946" height="25" fill="#f6f6f6"/>
<rect x="742" y="712" width="50" height="24" fill="#fff"/>
<use href="#win" x="60" y="718" width="11" height="11"/><use href="#chrome" x="86" y="717" width="14" height="14"/>
<use href="#fold" x="137" y="717" width="14" height="14"/><use href="#fold" x="187" y="717" width="14" height="14"/><use href="#fold" x="238" y="717" width="14" height="14"/><use href="#fold" x="289" y="717" width="14" height="14"/>
<use href="#baidu" x="340" y="717" width="14" height="14"/><use href="#speed" x="391" y="717" width="14" height="14"/><use href="#edit" x="441" y="717" width="14" height="14"/><use href="#user" x="492" y="717" width="14" height="14"/><use href="#ecs" x="543" y="717" width="14" height="14"/><use href="#note" x="594" y="717" width="14" height="14"/><use href="#fire" x="645" y="717" width="14" height="14"/><use href="#ie" x="695" y="717" width="14" height="14"/><use href="#pl" x="747" y="717" width="14" height="15"/>
<g font-size="8.500" fill="#444"><text x="103" y="728">平台...</text><text x="154" y="728">dow...</text><text x="205" y="728">file</text><text x="255" y="728">moo...</text><text x="306" y="728">img</text><text x="357" y="728">欢迎...</text><text x="407" y="728">速盘 -...</text><text x="458" y="728">EditP...</text><text x="509" y="728">user ...</text><text x="560" y="728">ecs_...</text><text x="611" y="728">note....</text><text x="661" y="728">屏幕...</text><text x="712" y="728">用户...</text><text x="762" y="728">LP_2...</text></g>
<g fill="#2a67ad"><rect x="85" y="736" width="46" height="1.500"/><rect x="136" y="736" width="46" height="1.500"/><rect x="186" y="736" width="46" height="1.500"/><rect x="237" y="736" width="46" height="1.500"/><rect x="287" y="736" width="46" height="1.500"/><rect x="338" y="736" width="46" height="1.500"/><rect x="388" y="736" width="46" height="1.500"/><rect x="439" y="736" width="46" height="1.500"/><rect x="490" y="736" width="46" height="1.500"/><rect x="541" y="736" width="46" height="1.500"/><rect x="592" y="736" width="46" height="1.500"/><rect x="643" y="736" width="46" height="1.500"/><rect x="694" y="736" width="45" height="1.500"/><rect x="742" y="736" width="50" height="1.500"/></g>
<use href="#t1" x="797" y="719" width="10" height="10"/><use href="#baidu" x="811" y="718" width="11" height="11"/><use href="#t3" x="825" y="718" width="12" height="12"/><use href="#t4" x="841" y="719" width="10" height="10"/><use href="#t5" x="856" y="719" width="10" height="10"/><use href="#t6" x="871" y="719" width="10" height="10"/><use href="#t7" x="885" y="719" width="10" height="10"/><use href="#q" x="903" y="718" width="11" height="11"/>
<text x="942" y="722" font-size="8" text-anchor="middle" fill="#333">16:34</text><text x="942" y="733" font-size="8" text-anchor="middle" fill="#333">2020/8/7</text>
<use href="#chat" x="972" y="719" width="12" height="12"/>
</g>
</g>
<text x="1202" y="825" font-size="22" font-weight="bold" text-anchor="middle" fill="#1f70b0">最代码</text>

<!-- bottom transport -->
<rect x="603" y="869" width="621" height="2" fill="#333"/>
<rect x="72" y="869" width="522" height="2" fill="#3a96dd"/>
<circle cx="603" cy="870" r="8.800" fill="#000" stroke="#3a96dd" stroke-width="2"/>
<text x="72" y="896" font-size="11.700" fill="#e8e8e8">0:16:07</text>
<text x="1224" y="896" font-size="11.700" fill="#e8e8e8" text-anchor="end">0:18:54</text>
<g fill="none" stroke="#e6e6e6" stroke-width="1.300">
<path d="M88 922.500H91.500L96 918.500V933.500L91.500 929.500H88z"/>
<path d="M99.500 922.500Q101.500 926 99.500 929.500M102 920Q105 926 102 932M104.500 917.500Q109 926 104.500 934.500"/>
<path d="M137.500 917.500H157V931.500H145L142 935.500V931.500H137.500z"/>
<path d="M139.500 923.500H155M139.500 927H155" stroke-width="1"/>
<path d="M591 923A8.500 8.500 0 0 1 606 927"/><path d="M588.500 919.500 591 924.500 596 923.500"/>
<path d="M690 923A8.500 8.500 0 0 1 705 927" transform="translate(1396,0) scale(-1,1)" opacity="0"/>
<path d="M705 923A8.500 8.500 0 0 0 690 927"/><path d="M707.500 919.500 705 924.500 700 923.500"/>
<path d="M644.500 919V934M651.500 919V934" stroke-width="1.500"/>
<path d="M1041 934.500 1042.500 929 1054.500 917.500Q1056 916.500 1057.500 918 1059 919.500 1058 921L1046 933z"/><path d="M1052.500 919.500 1056 923"/>
<rect x="1089.500" y="920.500" width="19" height="11"/>
<path d="M1142 934 1157 918M1150 917.500H1157.500V925M1141.500 927V934.500H1149"/>
</g>
<rect x="1097" y="923" width="10" height="7" fill="#e6e6e6"/><rect x="1099" y="925" width="6" height="3" fill="#000"/>
<text x="598" y="934" font-size="12" text-anchor="middle" fill="#e6e6e6">10</text>
<text x="698" y="934" font-size="12" text-anchor="middle" fill="#e6e6e6">30</text>
<g fill="#e6e6e6"><circle cx="1191" cy="926" r="1.200"/><circle cx="1199" cy="926" r="1.200"/><circle cx="1207" cy="926" r="1.200"/></g>
</svg>
</body></html>
